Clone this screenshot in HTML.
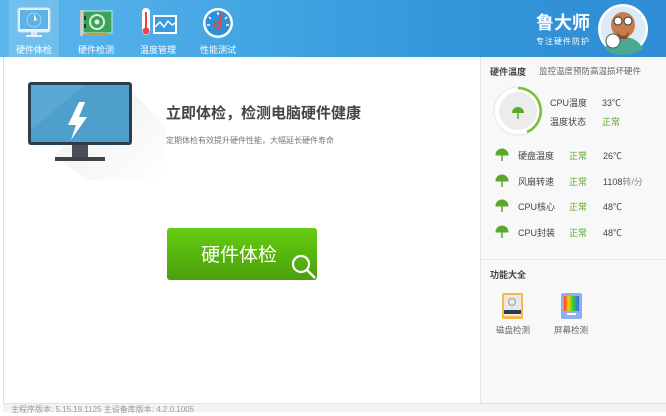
<!DOCTYPE html>
<html><head><meta charset="utf-8"><style>
*{margin:0;padding:0;box-sizing:border-box}
body{width:666px;height:412px;overflow:hidden;background:#fff;font-family:"Liberation Sans","Noto Sans CJK SC",sans-serif;position:relative}
.hdr{position:absolute;left:0;top:0;width:666px;height:57px;background:linear-gradient(90deg,#5cb6ec 0%,#45a6e4 35%,#3394d9 70%,#2f8dd5 100%)}
.tab{position:absolute;top:0;width:50px;height:57px;text-align:center;color:#fff;font-size:9px}
.tab span{position:absolute;left:0;right:0;top:43px}
.act{background:rgba(255,255,255,.15)}
.abs{position:absolute}
.leftline{position:absolute;left:3px;top:57px;width:1px;height:355px;background:#ddd}
.right{position:absolute;left:480px;top:57px;width:186px;height:346px;background:#f8f8f8;border-left:1px solid #e6e6e6}
.status{position:absolute;left:3px;top:403px;width:663px;height:9px;background:#f3f3f3;border-top:1px solid #e2e2e2;font-size:8px;color:#999;padding-left:8px;line-height:12px}
.t9{font-size:9px;color:#444}
.g{color:#5aa829}
</style></head><body>
<div class="hdr">
 <div class="tab act" style="left:9px">
  <svg class="abs" style="left:8px;top:7px" width="34" height="32"><rect x="1" y="1" width="32" height="24" rx="2" fill="#e9f4fb" stroke="#d0e6f3"/><rect x="3" y="3" width="28" height="19" fill="#5db3e6"/><circle cx="17" cy="13" r="7" fill="none" stroke="#9fd3f2"/><path d="M17 7 l3 6 -3 1z" fill="#fff"/><rect x="14" y="25" width="6" height="3" fill="#d8e8f2"/><rect x="9" y="28" width="16" height="2" fill="#e7f1f8"/></svg>
  <span>硬件体检</span></div>
 <div class="tab" style="left:71px">
  <svg class="abs" style="left:9px;top:8px" width="34" height="30"><rect x="0" y="2" width="3" height="26" fill="#c9c9c9"/><rect x="3" y="3" width="29" height="22" fill="#3aa35a" stroke="#cfe8d5"/><circle cx="17" cy="14" r="7" fill="none" stroke="#d8f0de" stroke-width="2"/><circle cx="17" cy="14" r="2.5" fill="#d8f0de"/><rect x="4" y="8" width="2" height="4" fill="#333"/><rect x="4" y="16" width="2" height="4" fill="#333"/><rect x="6" y="25" width="22" height="3" fill="#c99b3a"/></svg>
  <span>硬件检测</span></div>
 <div class="tab" style="left:133px">
  <svg class="abs" style="left:6px;top:8px" width="40" height="30"><rect x="3" y="0" width="8" height="27" rx="4" fill="#fff"/><rect x="6" y="4" width="2" height="16" fill="#e84545"/><circle cx="7" cy="23" r="3.5" fill="#e84545"/><rect x="14" y="7" width="24" height="19" fill="#fff"/><rect x="16" y="9" width="20" height="15" fill="#3a9be0"/><path d="M16 19 l5 -5 4 5 4 -6 4 4 3 -2" fill="none" stroke="#fff" stroke-width="1.5"/></svg>
  <span>温度管理</span></div>
 <div class="tab" style="left:193px">
  <svg class="abs" style="left:8px;top:7px" width="34" height="32"><circle cx="17" cy="16" r="15" fill="#fff"/><circle cx="17" cy="16" r="12.5" fill="#2f8fd8"/><path d="M17 5v3M8 10l2 2M26 10l-2 2M6 18h3M28 18h-3" stroke="#fff" stroke-width="1.5"/><path d="M21 7 L18 17" stroke="#e84545" stroke-width="2"/><circle cx="17" cy="18" r="3" fill="none" stroke="#e84545" stroke-width="2"/></svg>
  <span>性能测试</span></div>
 <div class="abs" style="left:536px;top:9px;color:#fff;font-size:18px;font-weight:bold">鲁大师</div>
 <div class="abs" style="left:536px;top:36px;color:#fff;font-size:8px;letter-spacing:1px">专注硬件防护</div>
 <svg class="abs" style="left:597px;top:3px" width="52" height="52"><circle cx="26" cy="26" r="25" fill="#fff"/><circle cx="26" cy="26" r="22.5" fill="#dcecf7"/><path d="M8 46 Q12 34 26 34 Q40 34 46 46 Q36 52 26 52 Q15 52 8 46z" fill="#4aa890"/><ellipse cx="26" cy="22" rx="12" ry="13" fill="#c87c4e"/><circle cx="21" cy="18" r="4" fill="#fff" stroke="#333"/><circle cx="31" cy="18" r="4" fill="#fff" stroke="#333"/><path d="M20 28 Q26 38 32 28 L30 36 L22 36z" fill="#8a4d2a"/><circle cx="16" cy="38" r="7" fill="#fff" stroke="#555"/></svg>
</div>
<div class="leftline"></div>
<svg class="abs" style="left:25px;top:80px" width="140" height="100"><defs><linearGradient id="sh" x1="0" y1="0" x2="1" y2="1"><stop offset="0" stop-color="#ececec"/><stop offset="1" stop-color="#fff"/></linearGradient></defs><path d="M100 5 L140 45 L140 100 L60 100 L30 75z" fill="url(#sh)"/><rect x="3" y="2" width="104" height="63" rx="3" fill="#2c3e4c"/><rect x="6" y="5" width="98" height="57" fill="#4f9fcc"/><path d="M6 5 L60 5 L6 50z" fill="#5aa9d4"/><path d="M54 22 L43 45 L51 45 L46 60 L62 37 L54 37 L60 22z" fill="#fff"/><rect x="47" y="65" width="16" height="12" fill="#4a4f55"/><rect x="30" y="77" width="50" height="4" fill="#3e4348"/></svg>
<div class="abs" style="left:166px;top:102px;font-size:15px;font-weight:bold;color:#444">立即体检，检测电脑硬件健康</div>
<div class="abs" style="left:166px;top:135px;font-size:8px;color:#777">定期体检有效提升硬件性能，大幅延长硬件寿命</div>
<div class="abs" style="left:167px;top:228px;width:150px;height:52px;border-radius:3px;background:linear-gradient(#66cc11,#4aa00a);color:#fff;font-size:19px;padding:12px 0 0 34px">硬件体检</div>
<svg class="abs" style="left:289px;top:252px" width="30" height="30"><circle cx="12" cy="12" r="8" fill="none" stroke="#fff" stroke-width="2.2"/><path d="M18 18 L26 26" stroke="#fff" stroke-width="2.5"/></svg>
<div class="right">
 <div class="abs" style="left:9px;top:8px;font-size:9px;font-weight:bold;color:#444">硬件温度</div>
 <div class="abs" style="left:58px;top:8px;font-size:8.5px;color:#666">监控温度预防高温损坏硬件</div>
 <svg class="abs" style="left:11px;top:28px" width="52" height="52"><circle cx="26" cy="26" r="24" fill="#fff" stroke="#e6e6e6"/><circle cx="26" cy="26" r="19" fill="#ececec"/><path d="M26 3 A23 23 0 0 1 35 47" fill="none" stroke="#7ac030" stroke-width="2.5"/><path d="M20 28 A6 6 0 0 1 32 28z" fill="#5aa829"/><path d="M26 28v6" stroke="#5aa829" stroke-width="1.5"/></svg>
 <div class="abs t9" style="left:69px;top:39px">CPU温度</div><div class="abs t9" style="left:121px;top:39px">33℃</div>
 <div class="abs t9" style="left:69px;top:58px">温度状态</div><div class="abs t9 g" style="left:121px;top:58px">正常</div>
 <div class="abs t9" style="left:37px;top:92px">硬盘温度</div><div class="abs t9 g" style="left:88px;top:92px">正常</div><div class="abs t9" style="left:122px;top:92px">26℃</div>
 <div class="abs t9" style="left:37px;top:118px">风扇转速</div><div class="abs t9 g" style="left:88px;top:118px">正常</div><div class="abs t9" style="left:122px;top:118px">1108<span style="color:#888">转/分</span></div>
 <div class="abs t9" style="left:37px;top:143px">CPU核心</div><div class="abs t9 g" style="left:88px;top:143px">正常</div><div class="abs t9" style="left:122px;top:143px">48℃</div>
 <div class="abs t9" style="left:37px;top:169px">CPU封装</div><div class="abs t9 g" style="left:88px;top:169px">正常</div><div class="abs t9" style="left:122px;top:169px">48℃</div>
 <svg class="abs" style="left:14px;top:91px" width="14" height="100"><g fill="#5aa829" stroke="#5aa829"><path d="M1 7 A6 6 0 0 1 13 7z"/><path d="M7 7v6" stroke-width="1.5"/><path d="M1 33 A6 6 0 0 1 13 33z"/><path d="M7 33v6" stroke-width="1.5"/><path d="M1 58 A6 6 0 0 1 13 58z"/><path d="M7 58v6" stroke-width="1.5"/><path d="M1 84 A6 6 0 0 1 13 84z"/><path d="M7 84v6" stroke-width="1.5"/></g></svg>
 <div class="abs" style="left:0;top:202px;width:186px;height:1px;background:#e6e6e6"></div>
 <div class="abs" style="left:9px;top:211px;font-size:9px;font-weight:bold;color:#444">功能大全</div>
 <svg class="abs" style="left:21px;top:236px" width="21" height="26"><rect x="0" y="0" width="21" height="26" rx="2" fill="#f7b84a"/><rect x="2" y="2" width="17" height="21" fill="#e9e9e9"/><circle cx="10" cy="9" r="3.5" fill="none" stroke="#999"/><rect x="2" y="17" width="17" height="4" fill="#2b3a4c"/></svg>
 <svg class="abs" style="left:80px;top:236px" width="21" height="26"><rect x="0" y="0" width="21" height="26" rx="2" fill="#8eb0f0"/><rect x="3" y="3" width="15" height="15" fill="url(#rb)"/><defs><linearGradient id="rb"><stop offset="0" stop-color="#f33"/><stop offset=".3" stop-color="#fc0"/><stop offset=".6" stop-color="#3c3"/><stop offset="1" stop-color="#36f"/></linearGradient></defs><rect x="6" y="20" width="9" height="2" fill="#fff"/></svg>
 <div class="abs" style="left:15px;top:267px;font-size:8.5px;color:#666">磁盘检测</div>
 <div class="abs" style="left:73px;top:267px;font-size:8.5px;color:#666">屏幕检测</div>
</div>
<div class="status">主程序版本: 5.15.19.1125   主设备库版本: 4.2.0.1005</div>
</body></html>
